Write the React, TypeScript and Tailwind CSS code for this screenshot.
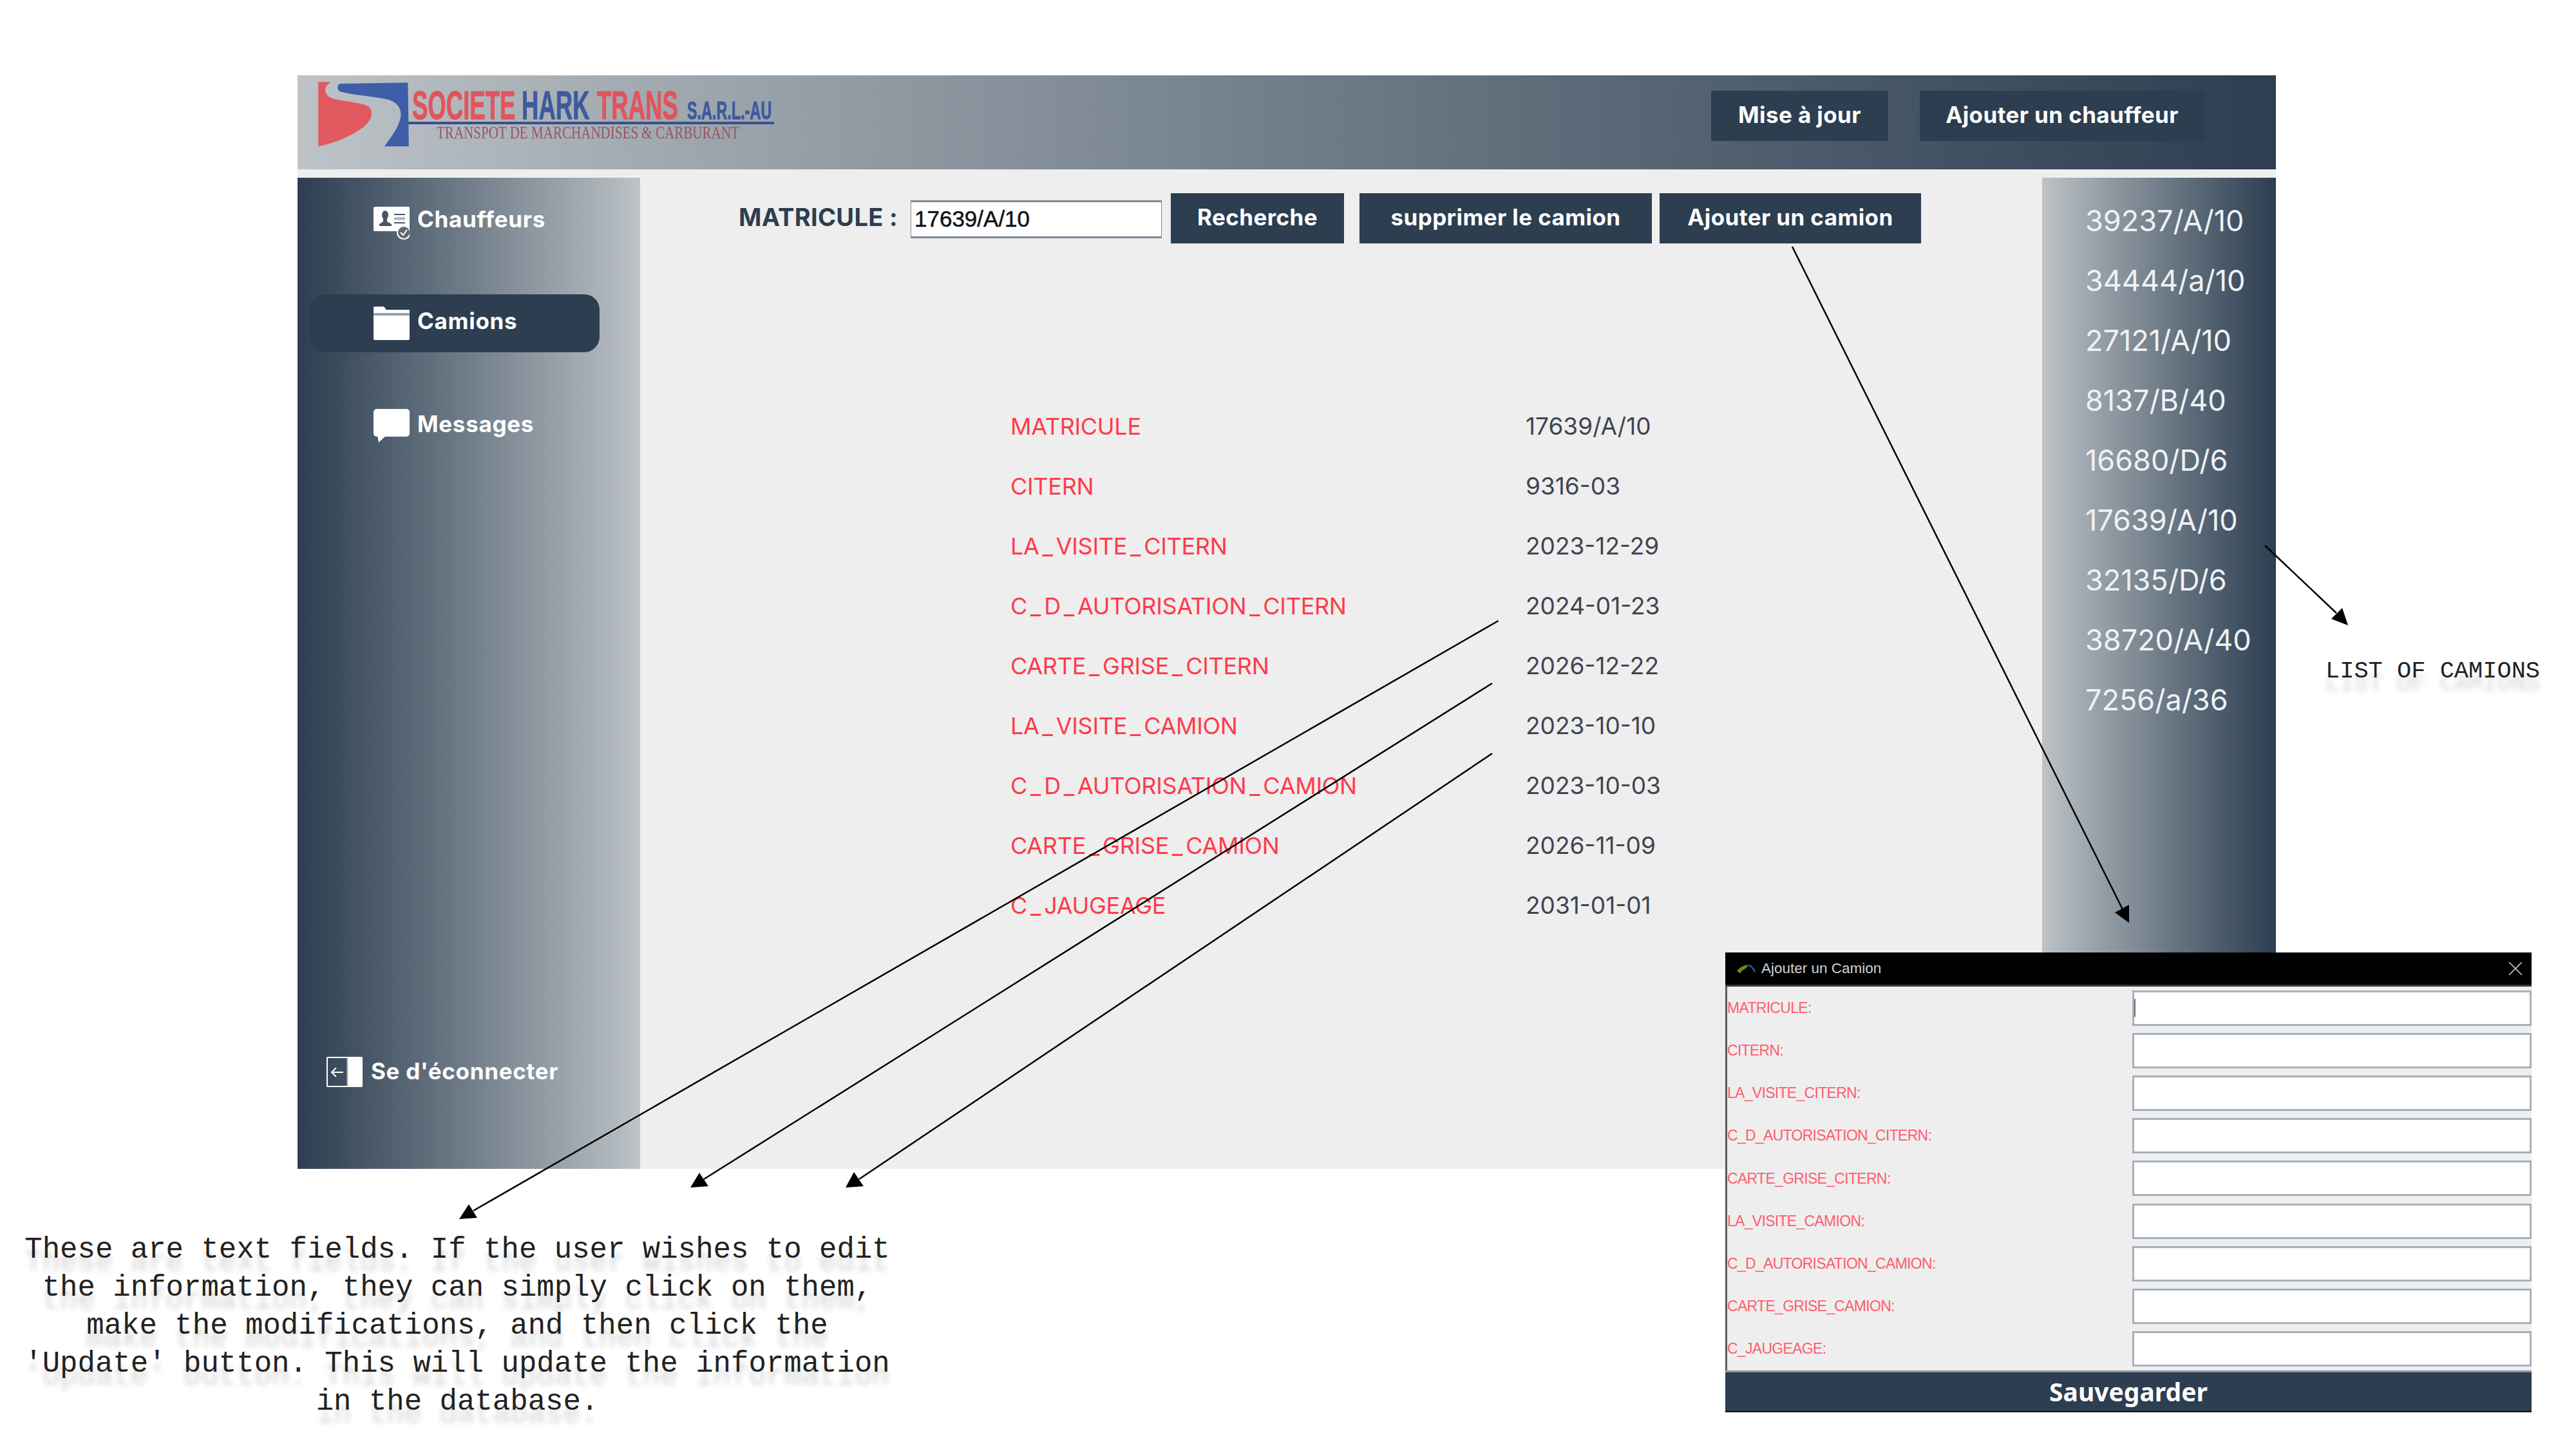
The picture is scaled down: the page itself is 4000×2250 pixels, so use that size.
import { X } from "lucide-react";

const UI_FONT = "font-['Inter','Noto_Sans',sans-serif]";

const details = [
  ["MATRICULE", "17639/A/10"],
  ["CITERN", "9316-03"],
  ["LA_VISITE_CITERN", "2023-12-29"],
  ["C_D_AUTORISATION_CITERN", "2024-01-23"],
  ["CARTE_GRISE_CITERN", "2026-12-22"],
  ["LA_VISITE_CAMION", "2023-10-10"],
  ["C_D_AUTORISATION_CAMION", "2023-10-03"],
  ["CARTE_GRISE_CAMION", "2026-11-09"],
  ["C_JAUGEAGE", "2031-01-01"],
];

const camions = [
  "39237/A/10",
  "34444/a/10",
  "27121/A/10",
  "8137/B/40",
  "16680/D/6",
  "17639/A/10",
  "32135/D/6",
  "38720/A/40",
  "7256/a/36",
];

function Logo() {
  return (
    <svg width="740" height="115" viewBox="0 0 740 115" className="blur-[0.6px]">
      <g transform="scale(0.472 0.3333)">
        <path
          d="M30 22 L72 22 C50 40 45 75 70 95 C100 112 170 115 195 135 C215 165 205 200 180 230 C150 265 90 305 30 322 Z"
          fill="#e2585f"
        />
        <path
          d="M100 30 L325 25 L328 322 L248 322 C265 285 300 230 302 170 C300 130 280 105 240 98 C190 85 130 80 100 65 C92 55 92 40 100 30 Z"
          fill="#3f5ea8"
        />
      </g>
      <g fontFamily="'Liberation Sans', sans-serif" fontWeight="700" strokeWidth="1">
        <text transform="translate(160 65) scale(0.58 1)" fontSize="63" fill="#e2545c" stroke="#e2545c">SOCIETE</text>
        <text transform="translate(330 65) scale(0.58 1)" fontSize="63" fill="#3d5a9e" stroke="#3d5a9e">HARK</text>
        <text transform="translate(447 65) scale(0.58 1)" fontSize="63" fill="#e2545c" stroke="#e2545c">TRANS</text>
        <text transform="translate(587 65) scale(0.6 1)" fontSize="39" fill="#3d5a9e" stroke="#3d5a9e">S.A.R.L.-AU</text>
      </g>
      <rect x="154" y="69" width="568" height="4" fill="#3c4f8e" />
      <text
        transform="translate(198 95) scale(0.78 1)"
        fontSize="27"
        fontFamily="'Liberation Serif', serif"
        fill="#96565e"
      >
        TRANSPOT DE MARCHANDISES &amp; CARBURANT
      </text>
    </svg>
  );
}

function DriverIcon() {
  return (
    <svg width="56" height="52" viewBox="0 0 56 52" className="mt-[6px] shrink-0">
      <rect x="0" y="1" width="56" height="38" rx="2" fill="#fff" />
      <ellipse cx="18" cy="14" rx="5" ry="7" fill="#4a5866" />
      <path d="M15 20 H21 V24 L28 28 V31 H9 V28 L15 24 Z" fill="#4a5866" />
      <path d="M32 13 H49" stroke="#4a5866" strokeWidth="2" />
      <path d="M32 19.5 H49" stroke="#a9b2bb" strokeWidth="4" />
      <path d="M32 26 H49" stroke="#4a5866" strokeWidth="2" />
      <circle cx="47" cy="41" r="10" fill="#5c6975" stroke="#fff" strokeWidth="2" />
      <path d="M42 41 L46 45 L52 37" fill="none" stroke="#fff" strokeWidth="2" />
    </svg>
  );
}

function FolderIcon() {
  return (
    <svg width="56" height="52" viewBox="0 0 56 52" className="shrink-0">
      <path d="M0 2 Q0 0 2 0 H16 L20 5 H56 V50 Q56 52 54 52 H2 Q0 52 0 50 Z" fill="#fff" />
      <rect x="0" y="10" width="56" height="4" fill="#9aa3ac" />
    </svg>
  );
}

function MessageIcon() {
  return (
    <svg width="56" height="52" viewBox="0 0 56 52" className="shrink-0">
      <rect x="0" y="0" width="56" height="43" rx="5" fill="#fff" />
      <path d="M6 41 H20 L8 52 Z" fill="#fff" />
    </svg>
  );
}

function LogoutIcon() {
  return (
    <svg width="56" height="47" viewBox="0 0 56 47" className="shrink-0">
      <rect x="1" y="1" width="54" height="45" rx="1" fill="none" stroke="#fff" strokeWidth="2" />
      <rect x="33" y="1" width="23" height="45" fill="#fff" />
      <rect x="31" y="2" width="2" height="43" fill="#8a949d" />
      <path d="M26 24 H8 M15 17 L8 24 L15 31" fill="none" stroke="#fff" strokeWidth="2" />
    </svg>
  );
}

function DarkButton({ label, className }: { label: string; className: string }) {
  return (
    <button className={`h-[78px] shrink-0 pb-[4px] bg-[#2c3e50] text-[35px] font-bold text-white flex items-center justify-center tracking-[0.4px] ${className}`}>
      {label}
    </button>
  );
}

// the underscores are wider in the reference font than in Inter
function FieldName({ name }: { name: string }) {
  const parts = name.split("_");
  return (
    <span className="text-[36px] tracking-[-0.3px] text-[#ff3b4a]">
      {parts.map((part, i) => (
        <span key={i}>
          {i > 0 && <span className="mx-[5px]">_</span>}
          {part}
        </span>
      ))}
    </span>
  );
}

function Annotations() {
  return (
    <svg width="4000" height="2250" viewBox="0 0 4000 2250" className="absolute inset-0 pointer-events-none">
      <g stroke="#000" strokeWidth="2.5">
        <line x1="2326.5" y1="964" x2="735" y2="1880" />
        <line x1="2317" y1="1061" x2="1093" y2="1831" />
        <line x1="2317" y1="1170" x2="1334" y2="1831" />
        <line x1="2783" y1="383" x2="3296" y2="1412" />
        <line x1="3517" y1="847" x2="3628" y2="952" />
      </g>
      <polygon points="713,1893 728,1870 741,1891" fill="#000" />
      <polygon points="1072,1844 1086,1821 1100,1842" fill="#000" />
      <polygon points="1313,1844 1326,1820 1341,1842" fill="#000" />
      <polygon points="3284,1417 3306,1405 3306,1433" fill="#000" />
      <polygon points="3646,971 3620,961 3637,944" fill="#000" />
    </svg>
  );
}

function AddCamionDialog() {
  return (
    <div className="absolute left-[2679px] top-[1479px] w-[1252px] h-[714px] flex flex-col font-['Liberation_Sans',sans-serif]">
      <div className="h-[50px] shrink-0 bg-black flex items-center pl-[17px] pr-[6px] text-[#cfd4d9]">
        <svg width="30" height="14" viewBox="0 0 30 14" className="mr-[9px]">
          <path d="M1 11 C6 4 12 2 19 1 C17 6 11 10 4 12 Z" fill="#5f8f1e" />
          <path d="M3 12 L9 10 L6 14 Z" fill="#b58a12" />
          <path d="M19 2 C23 2 26 6 29 12" fill="none" stroke="#3f6fb0" strokeWidth="2" />
        </svg>
        <span className="text-[22.5px]">Ajouter un Camion</span>
        <X className="ml-auto w-[38px] h-[38px]" strokeWidth={1} />
      </div>
      <div className="flex-1 flex flex-col bg-[#eeeeee] border-t-[3px] border-l-[3px] border-t-[#3a3a3a] border-l-[#5a5a5a]">
        {details.map(([name], i) => (
          <div key={name} className="h-[66.2px] flex items-center justify-between">
            <span className="text-[23px] tracking-[-0.7px] text-[#ff5c6e]">{name}:</span>
            <div className="w-[620px] h-[55px] bg-white border-[3px] border-[#a7b1bb] flex items-center">
              {i === 0 && <div className="w-[2px] h-[28px] bg-[#6b7480]" />}
            </div>
          </div>
        ))}
      </div>
      <button className="h-[65px] shrink-0 bg-[#2c3e50] border-t-[3px] border-b-[2px] border-t-[#8f979e] border-b-[#111] text-white text-[39px] font-bold font-['Noto_Sans',sans-serif]">
        Sauvegarder
      </button>
    </div>
  );
}

export default function App() {
  return (
    <div className="relative w-[4000px] h-[2250px] bg-white pt-[117px] pl-[462px] overflow-hidden">
      <div className={`w-[3072px] h-[1698px] flex flex-col bg-[#eeeeee] ${UI_FONT}`}>
        <header className="h-[146px] shrink-0 flex justify-between pt-[3px] pl-[18px] pr-[111px] bg-gradient-to-r from-[#bdc3c7] to-[#2c3e50]">
          <Logo />
          <div className="flex gap-[49px] pt-[21px]">
            <DarkButton label="Mise à jour" className="w-[275px]" />
            <DarkButton label="Ajouter un chauffeur" className="w-[442px]" />
          </div>
        </header>

        <div className="flex-1 mt-[13px] flex">
          <aside className="w-[532px] shrink-0 flex flex-col pt-[22px] pb-[106px] bg-gradient-to-r from-[#2c3e50] to-[#bdc3c7] text-white text-[35px] font-bold tracking-[0.7px]">
            <div className="flex flex-col gap-[69px]">
              <div className="ml-[18px] w-[451px] h-[90px] pl-[100px] flex items-center gap-[12px]">
                <DriverIcon />
                <span className="-mt-[6px]">Chauffeurs</span>
              </div>
              <div className="ml-[18px] w-[451px] h-[90px] pl-[100px] flex items-center gap-[12px] bg-[#2c3e50] rounded-[24px]">
                <FolderIcon />
                <span className="-mt-[8px]">Camions</span>
              </div>
              <div className="ml-[18px] w-[451px] h-[90px] pl-[100px] flex items-center gap-[12px]">
                <MessageIcon />
                <span className="-mt-[6px]">Messages</span>
              </div>
            </div>
            <div className="mt-auto h-[90px] pl-[45px] flex items-center gap-[13px]">
              <LogoutIcon />
              <span className="-mt-[2px]">Se d'éconnecter</span>
            </div>
          </aside>

          <main className="flex-1 pt-[24px]">
            <div className="flex items-center pl-[153px]">
              <div className="w-[267px] -mt-[3px] text-[38px] font-bold tracking-[0.3px] text-[#2c3e50]">MATRICULE :</div>
              <div className="w-[390px] h-[59px] bg-white border-y-[3px] border-x border-[#7b8a99] mt-[2px] flex items-center pl-[5px] text-[35px] text-[#111] [-webkit-text-stroke:0.5px_#111] font-['Liberation_Sans',sans-serif]">
                17639/A/10
              </div>
              <DarkButton label="Recherche" className="w-[269px] ml-[14px]" />
              <DarkButton label="supprimer le camion" className="w-[454px] ml-[24px]" />
              <DarkButton label="Ajouter un camion" className="w-[406px] ml-[12px]" />
            </div>
            <div className="mt-[237px] pl-[575px] grid grid-cols-[800px_1fr] auto-rows-[93px] items-center text-[37px]">
              {details.map(([name, value]) => (
                <div key={name} className="contents">
                  <FieldName name={name} />
                  <span className="text-[#3f4450]">{value}</span>
                </div>
              ))}
            </div>
          </main>

          <aside className="w-[363px] shrink-0 pt-[20px] pl-[67px] bg-gradient-to-r from-[#bdc3c7] to-[#2c3e50] text-[45px] text-[#eef1f4]">
            {camions.map((c) => (
              <div key={c} className="h-[93px] flex items-center">
                {c}
              </div>
            ))}
          </aside>
        </div>
      </div>

      <Annotations />

      <p className="absolute left-[3611px] top-[1020px] font-['Liberation_Mono',monospace] text-[37px] leading-[44px] text-[#222] whitespace-nowrap [text-shadow:0_20px_8px_rgba(0,0,0,0.18)]">
        LIST OF CAMIONS
      </p>
      <p className="absolute left-[10px] top-[1912px] w-[1400px] text-center font-['Liberation_Mono',monospace] text-[45.7px] leading-[59px] text-[#222] [text-shadow:0_20px_8px_rgba(0,0,0,0.18)]">
        These are text fields. If the user wishes to edit
        <br />
        the information, they can simply click on them,
        <br />
        make the modifications, and then click the
        <br />
        'Update' button. This will update the information
        <br />
        in the database.
      </p>

      <AddCamionDialog />
    </div>
  );
}
